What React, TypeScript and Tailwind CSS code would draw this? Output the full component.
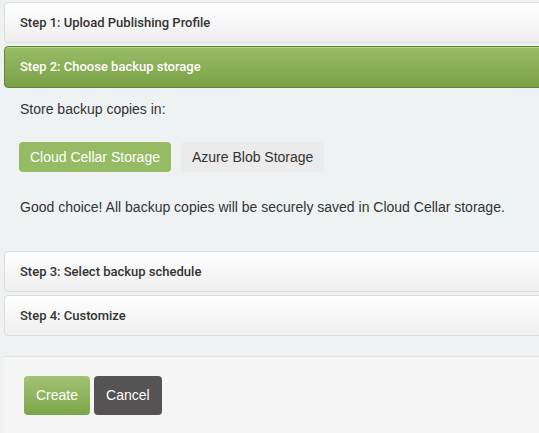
import { ReactNode } from "react";

const font = { fontFamily: '"Liberation Sans", Arial, sans-serif' };
const headFont = { fontFamily: 'Roboto, "Liberation Sans", Arial, sans-serif' };

function StepHeader({ children, active }: { children: ReactNode; active?: boolean }) {
  if (active) {
    return (
      <div
        className="h-[42px] mr-[-12px] rounded-l-[4px] border border-[#5f8a35] bg-gradient-to-b from-[#98bd67] to-[#7ba147] shadow-[inset_0_1px_0_#b7d48e] flex items-center pl-[15px] text-[13px] font-medium text-white"
        style={headFont}
      >
        {children}
      </div>
    );
  }
  return (
    <div
      className="h-[41px] mr-[-12px] rounded-l-[4px] border border-[#dcdcdc] bg-gradient-to-b from-white to-[#efefef] flex items-center pl-[15px] text-[13px] font-medium text-[#333]"
      style={headFont}
    >
      {children}
    </div>
  );
}

export default function App() {
  return (
    <div className="w-[539px] h-[433px] overflow-hidden bg-[#eff2f3] text-[#333]" style={font}>
      <div className="pl-[4px] pt-[2px] flex flex-col gap-[3px]">
        <StepHeader>Step 1: Upload Publishing Profile</StepHeader>
        <StepHeader active>Step 2: Choose backup storage</StepHeader>
      </div>

      <div className="pl-[20px] pt-[12px] text-[14px]">
        <p className="leading-[18px]">Store backup copies in:</p>
        <div className="flex gap-[10px] mt-[24px] -ml-[1px]">
          <button className="h-[30px] px-[11px] rounded-[4px] bg-[#96bb65] text-white text-[14px]">
            Cloud Cellar Storage
          </button>
          <button className="h-[30px] px-[11px] rounded-[4px] bg-[#ebebeb] text-[#333] text-[14px]">
            Azure Blob Storage
          </button>
        </div>
        <p className="mt-[26px] leading-[18px]">
          Good choice! All backup copies will be securely saved in Cloud Cellar storage.
        </p>
      </div>

      <div className="pl-[4px] mt-[35px] flex flex-col gap-[3px]">
        <StepHeader>Step 3: Select backup schedule</StepHeader>
        <StepHeader>Step 4: Customize</StepHeader>
      </div>

      <div className="ml-[4px] mt-[20px] border-t border-[#e2e2e2] bg-[#f5f5f5] h-[100px] pl-[20px] pt-[19px] flex gap-[4px] items-start">
        <button className="h-[39px] px-[12px] rounded-[4px] bg-gradient-to-b from-[#a3c274] to-[#7ca648] text-white text-[14px]">
          Create
        </button>
        <button className="h-[39px] px-[12px] rounded-[4px] bg-[#555353] text-white text-[14px]">
          Cancel
        </button>
      </div>
    </div>
  );
}
